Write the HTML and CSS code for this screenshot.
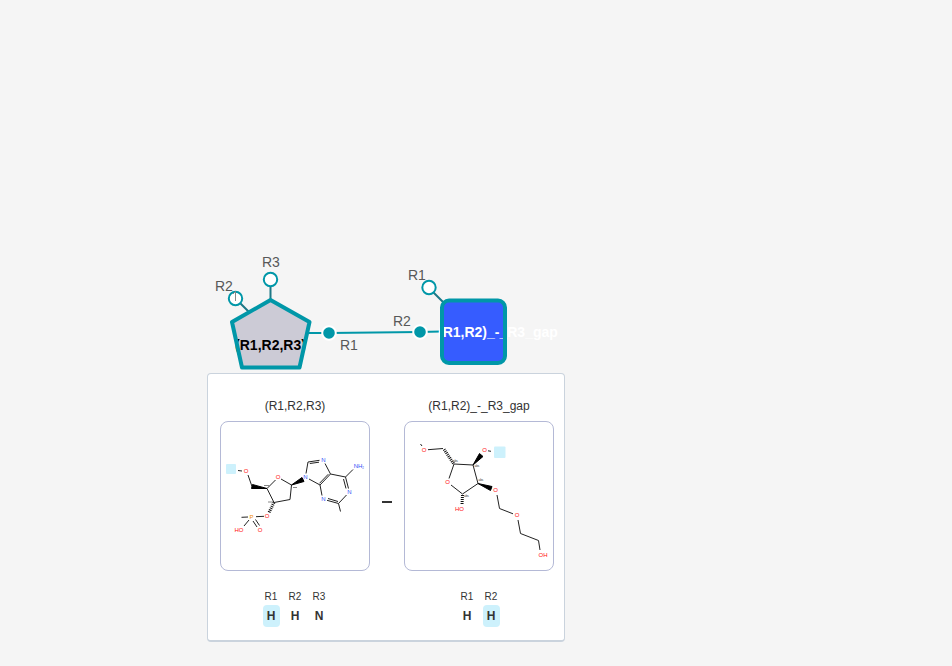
FILE: index.html
```html
<!DOCTYPE html>
<html lang="en">
<head>
<meta charset="utf-8">
<title>Macromolecule canvas</title>
<link rel="stylesheet" href="styles.css">
</head>
<body>
<main class="canvas">
  <svg class="scene" width="952" height="666" viewBox="0 0 952 666">
    <path class="bond" d="M308 333L329 333L420 332L441 331.500"/>
    <g class="stems">
      <path d="M236 299L250 313M270.500 286V300M429 288L446 305"/>
    </g>
    <g class="free-points">
      <circle cx="235.500" cy="298.500" r="6.700"/>
      <circle cx="270.500" cy="279.500" r="6.700"/>
      <circle cx="429" cy="287.500" r="6.700"/>
    </g>
    <path class="point-mark" d="M233 294L235.500 291.500V301"/>
    <g class="used-points">
      <circle cx="329" cy="333" r="6.800"/>
      <circle cx="420" cy="332" r="6.800"/>
    </g>
    <path class="base" d="M270.500 299.500L309.500 322L299.500 368H242L232 322Z"/>
    <text class="monomer-name" x="270.500" y="350" text-anchor="middle">(R1,R2,R3)</text>
    <path class="outline" d="M270.500 300L309.500 322L299.500 367.500H242L232 322Z"/>
    <rect class="chem" x="442" y="300.500" width="63" height="62.500" rx="7"/>
    <text class="monomer-name light" x="438" y="337">(R1,R2)_-_R3_gap</text>
    <rect class="outline" x="442" y="300.500" width="63" height="62.500" rx="7"/>
    <g class="point-labels">
      <text x="215" y="291">R2</text>
      <text x="262" y="267">R3</text>
      <text x="340" y="350">R1</text>
      <text x="408" y="280">R1</text>
      <text x="393" y="326">R2</text>
    </g>
  </svg>

  <section class="preview" aria-label="Bond preview">
    <article class="monomer">
      <h2 class="title">(R1,R2,R3)</h2>
      <div class="structure">
        <svg viewBox="221 422 148 148">
          <rect class="leaving" x="226" y="464" width="10" height="10" rx="1"/>
          <path class="line" d="M238 470.500L242 471M248 475L252 486.500M267 488.500L275.500 480M281 479L291.500 485L290 499.500L274 502.500L267 488.500M264 516.300L256 516.700M248 517L241.500 517.300M249 520L244 526M253 521L257 527M255.500 519.500L259.500 525.500"/>
          <path class="wedge" d="M267 488.500L252.500 484.500L251.500 488.500ZM291.500 485L302 477.500L304 481.500Z"/>
          <path class="hash" d="M274 502.500L269 512.500"/>
          <path class="line" d="M306 473.500L308 462L319.500 460.300M309.800 463.500L319 462.200M325 463.500L330.500 474L320 485L309 479M328.300 474.200L319.500 483.300M320 485L322 495.500M327 500.300L338.500 503.500L346.500 495M328 498.500L338 501.500M338.500 503.500L340.500 511.500M348.500 488.500L345.500 477L330.500 474M346 488.500L343.500 479M345.500 477L353 469.500"/>
          <path class="stereo" d="M264 485.500H269M293 487.500H297M268 502H273"/>
          <g class="atom oxygen">
            <text x="246" y="473">O</text><text x="278" y="479">O</text><text x="267" y="518">O</text><text x="260" y="532">O</text><text x="239" y="532">HO</text>
          </g>
          <text class="atom phosphorus" x="251.500" y="519">P</text>
          <g class="atom nitrogen">
            <text x="305.500" y="479">N</text><text x="323.500" y="462">N</text><text x="323.500" y="501">N</text><text x="349.500" y="494">N</text><text x="358" y="468">NH</text><text class="sub" x="363" y="469">2</text>
          </g>
        </svg>
      </div>
      <div class="groups">
        <div class="group"><span class="slot">R1</span><b class="cap active">H</b></div>
        <div class="group"><span class="slot">R2</span><b class="cap">H</b></div>
        <div class="group"><span class="slot">R3</span><b class="cap">N</b></div>
      </div>
    </article>
    <div class="link"></div>
    <article class="monomer">
      <h2 class="title">(R1,R2)_-_R3_gap</h2>
      <div class="structure">
        <svg viewBox="405 422 148 148">
          <rect class="leaving" x="494" y="446.500" width="11.500" height="11.500" rx="1"/>
          <path class="line" d="M420.500 444L422 446M428 449.700L443 448.500M449 478.500L454 464L473 465L478 483.500L462.500 494L451 485M488 450.800L491 451.300M497 495L499.500 508.500L513 513.800M518 520L520.500 533.500L538.500 540.500L540 550"/>
          <path class="wedge" d="M473 465L479.500 453.500L483 456.500ZM478 483.500L492 486.500L490.500 490.500Z"/>
          <path class="hash" d="M453.500 463.500L443.500 448.500M462.500 495L462 504.500"/>
          <g class="abs">
            <text x="453" y="462">abs</text><text x="474.500" y="467">abs</text><text x="478.500" y="481">abs</text><text x="464" y="497">abs</text>
          </g>
          <g class="atom oxygen">
            <text x="424" y="452">O</text><text x="447.500" y="484">O</text><text x="484.500" y="452">O</text><text x="495.500" y="492">O</text><text x="517" y="517">O</text><text x="459.500" y="511">HO</text><text x="543" y="557">OH</text>
          </g>
        </svg>
      </div>
      <div class="groups">
        <div class="group"><span class="slot">R1</span><b class="cap">H</b></div>
        <div class="group"><span class="slot">R2</span><b class="cap active">H</b></div>
      </div>
    </article>
  </section>
</main>
</body>
</html>
```
FILE: styles.css
```css
* { box-sizing: border-box; }
body {
  margin: 0;
  background: #f5f5f5;
  color: #333;
  font-family: "Liberation Sans", Arial, sans-serif;
}
.canvas {
  position: relative;
  min-height: 100vh;
  overflow: hidden;
}
.scene { display: block; }
.bond { fill: none; stroke: #0097a8; stroke-width: 2; }
.stems { stroke: #1e7886; stroke-width: 2; }
.free-points { fill: #fff; stroke: #0097a8; stroke-width: 2; }
.used-points { fill: #0097a8; stroke: #fff; stroke-width: 2; }
.point-mark { fill: none; stroke: #888; stroke-width: 1; }
.base { fill: #cccbd6; }
.chem { fill: #365cff; }
.outline {
  fill: none;
  stroke: #0097a8;
  stroke-width: 4;
  stroke-linejoin: round;
}
.monomer-name { font-size: 14px; font-weight: 700; fill: #000; }
.light { fill: #fff; }
.point-labels { font-size: 14px; fill: #585858; }

/* Bond preview popup */
.preview {
  position: absolute;
  left: 207px;
  top: 373px;
  display: flex;
  padding: 24px 10px 13px 12px;
  background: #fff;
  border: 1px solid #cad3dd;
  border-bottom-width: 2px;
  border-radius: 4px;
}
.monomer {
  display: flex;
  flex-direction: column;
  align-items: center;
}
.title {
  margin: 0 0 7px;
  font-size: 12px;
  font-weight: 400;
  line-height: 16px;
}
.structure {
  width: 150px;
  height: 150px;
  border: 1px solid #b4b9d6;
  border-radius: 8px;
}
.structure svg { display: block; width: 100%; height: 100%; }
.link {
  width: 10px;
  height: 2px;
  margin: 103px 12px 0;
  background: #333;
}
.groups {
  display: flex;
  gap: 7px;
  margin-top: 20px;
}
.group {
  display: flex;
  flex-direction: column;
  align-items: center;
  width: 17px;
  gap: 2px;
}
.slot { font-size: 10px; line-height: 12px; }
.cap {
  width: 17px;
  border-radius: 4px;
  font-size: 12px;
  line-height: 22px;
  text-align: center;
}
.active { background: #cdf1fc; }

/* Molecule drawing */
.line { fill: none; stroke: #222; stroke-width: 1; }
.wedge { fill: #000; stroke: #000; stroke-width: 1; stroke-linejoin: round; }
.hash { fill: none; stroke: #111; stroke-width: 3; stroke-dasharray: 1 1; }
.stereo { fill: none; stroke: #888; stroke-width: 1; }
.leaving { fill: #cdf1fc; }
.atom { font-size: 6px; text-anchor: middle; }
.oxygen { fill: #ff0d0d; }
.nitrogen { fill: #304ff7; }
.phosphorus { fill: #f08a00; }
.sub { font-size: 3px; }
.abs { font-size: 3px; fill: #333; }
```
